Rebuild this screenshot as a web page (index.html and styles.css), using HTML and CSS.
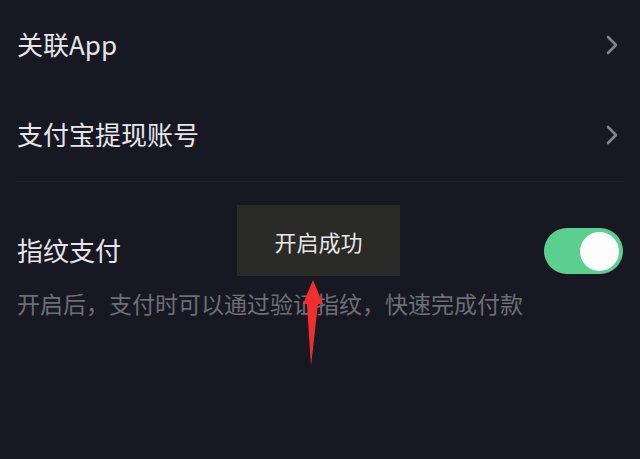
FILE: index.html
```html
<!DOCTYPE html>
<html lang="zh-CN">

<head>
  <meta charset="UTF-8">
  <meta name="viewport" content="width=device-width, initial-scale=1.0">
  <title>钱包设置</title>
  <link rel="stylesheet" href="styles.css">
</head>

<body>
  <div class="page">
    <ul class="menu">
      <li class="menu-item">
        <span class="menu-title">关联App</span>
        <svg class="chevron" width="12" height="20" viewBox="0 0 12 20">
          <polyline points="2,2 10,10 2,18" />
        </svg>
      </li>
      <li class="menu-item menu-item-last">
        <span class="menu-title">支付宝提现账号</span>
        <svg class="chevron" width="12" height="20" viewBox="0 0 12 20">
          <polyline points="2,2 10,10 2,18" />
        </svg>
      </li>
    </ul>

    <div class="finger">
      <div class="finger-row">
        <span class="menu-title">指纹支付</span>
        <div class="switch on">
          <span class="switch-knob"></span>
        </div>
      </div>
      <p class="finger-tip">开启后，支付时可以通过验证指纹，快速完成付款</p>
    </div>

    <!-- 提示框 -->
    <div class="toast">开启成功</div>

    <!-- 红色箭头标注 -->
    <svg class="mark-arrow" width="24" height="88" viewBox="0 0 24 88">
      <polygon points="11,0 21,24 16,24 9,86 5,24 1,24" />
    </svg>
  </div>
</body>

</html>
```

FILE: styles.css
```css
* {
  padding: 0;
  margin: 0;
  box-sizing: border-box;
}

html,
body {
  height: 100%;
}

body {
  background-color: #181822;
  font-family: "Noto Sans CJK SC", "Noto Sans", sans-serif;
  color: #e6e6ea;
  overflow: hidden;
}

.page {
  position: relative;
  height: 459px;
  padding: 0 17px;
}

.menu {
  list-style: none;
}

.menu-item {
  display: flex;
  align-items: center;
  justify-content: space-between;
  height: 90px;
}

.menu-item .menu-title {
  margin-bottom: 3px;
}

.menu-item-last {
  height: 92px;
  padding-bottom: 1px;
  border-bottom: 1px solid #20202b;
}

.menu-title {
  font-size: 26px;
  line-height: 30px;
}

.chevron {
  margin-right: 5px;
  fill: none;
  stroke: #85858d;
  stroke-width: 2.6;
  stroke-linecap: round;
  stroke-linejoin: round;
}

.finger {
  padding-top: 46px;
}

.finger-row {
  display: flex;
  align-items: center;
  justify-content: space-between;
  height: 46px;
}

.finger-row .menu-title {
  margin-bottom: 2px;
}

.switch {
  display: flex;
  align-items: center;
  width: 79px;
  height: 46px;
  padding: 0 4px;
  border-radius: 23px;
  background-color: #3a3a44;
}

.switch.on {
  justify-content: flex-end;
  background-color: #5bcf8f;
}

.switch-knob {
  width: 39px;
  height: 39px;
  border-radius: 50%;
  background-color: #fdfdfd;
}

.finger-tip {
  margin-top: 14px;
  font-size: 23px;
  line-height: 30px;
  color: #6e6e76;
}

.toast {
  position: absolute;
  left: 237px;
  top: 205px;
  width: 163px;
  height: 71px;
  display: flex;
  align-items: center;
  justify-content: center;
  background-color: #2a2a28;
  color: #e8e8e8;
  font-size: 22px;
}

.mark-arrow {
  position: absolute;
  left: 302px;
  top: 280px;
  fill: #f02e30;
}
```
